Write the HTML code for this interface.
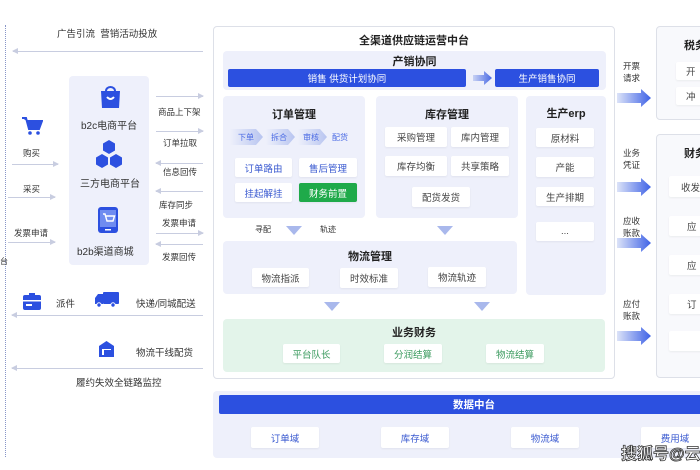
<!DOCTYPE html>
<html><head><meta charset="utf-8"><style>
*{margin:0;padding:0;box-sizing:border-box}
body{width:700px;height:470px;background:#fff;position:relative;overflow:hidden;font-family:"Liberation Sans","Noto Sans CJK SC",sans-serif;color:#333}
.a{position:absolute}
.t{position:absolute;font-size:9px;color:#333;white-space:nowrap}
.p{position:absolute;background:#eef0fb;border-radius:4px}
.b{position:absolute;background:#fff;border-radius:2px;font-size:9.5px;color:#444;display:flex;align-items:center;justify-content:center;box-shadow:0 1px 2px rgba(0,0,0,.06);white-space:nowrap}
.h{position:absolute;font-size:11px;font-weight:bold;color:#222;text-align:center;white-space:nowrap}
.ln{position:absolute;height:1px;background:#c8cde0}
.al:before{content:"";position:absolute;left:-1px;top:-3px;border:3.5px solid transparent;border-right:6px solid #c8cde0;border-left:0}
.ar:after{content:"";position:absolute;right:-1px;top:-3px;border:3.5px solid transparent;border-left:6px solid #c8cde0;border-right:0}
.blue{position:absolute;background:#2c50e0;color:#fff;font-size:9.5px;display:flex;align-items:center;justify-content:center;border-radius:2px}
.dn{position:absolute;width:0;height:0;border-left:8px solid transparent;border-right:8px solid transparent;border-top:9px solid #a9b8ec}
.ra{position:absolute;width:34px;height:18px}
.g{color:#3a9a5e}
</style></head><body>
<!-- left dotted line -->
<div class="a" style="left:5px;top:25px;width:2px;height:432px;border-left:1px dotted #8896c8"></div>
<div class="t" style="left:0;top:256px;font-size:8px">台</div>

<div class="t" style="left:57px;top:26px;font-size:9.5px">广告引流&nbsp; 营销活动投放</div>
<div class="ln al" style="left:13px;top:51px;width:190px"></div>

<div class="p" style="left:69px;top:76px;width:80px;height:189px"></div>
<svg class="a" style="left:98px;top:86px" width="25" height="23" viewBox="0 0 25 23"><path d="M3 5h19l-1 17H4z" fill="#2c50e0"/><path d="M8 5a4.5 4 0 0 1 9 0" fill="none" stroke="#2c50e0" stroke-width="2"/><path d="M9 11q3.5 4 7 0" fill="none" stroke="#fff" stroke-width="2"/></svg>
<div class="t" style="left:81px;top:117px;font-size:10px">b2c电商平台</div>
<svg class="a" style="left:93px;top:139px" width="32" height="32" viewBox="0 0 32 32" fill="#2c50e0"><polygon points="16,1 22,4.5 22,11.5 16,15 10,11.5 10,4.5"/><polygon points="9,15 15,18.5 15,25.5 9,29 3,25.5 3,18.5"/><polygon points="23,15 29,18.5 29,25.5 23,29 17,25.5 17,18.5"/></svg>
<div class="t" style="left:80px;top:175px;font-size:10px">三方电商平台</div>
<svg class="a" style="left:97px;top:206px" width="22" height="28" viewBox="0 0 22 28"><rect x="1" y="1" width="20" height="26" rx="3" fill="#2c50e0"/><rect x="3" y="4" width="16" height="17" fill="#6f8cf0"/><path d="M6 8h2l2 7h6l1.5-5H9" fill="none" stroke="#fff" stroke-width="1.4"/><rect x="8" y="23" width="6" height="1.5" fill="#fff"/></svg>
<div class="t" style="left:77px;top:243px;font-size:10px">b2b渠道商城</div>

<svg class="a" style="left:21px;top:116px" width="22" height="20" viewBox="0 0 22 20"><path d="M1 2h4l3 11h10l3-8H6" fill="#2c50e0" stroke="#2c50e0" stroke-width="2"/><circle cx="9" cy="17" r="1.8" fill="#2c50e0"/><circle cx="17" cy="17" r="1.8" fill="#2c50e0"/></svg>
<div class="t" style="left:23px;top:147px;font-size:8.5px">购买</div>
<div class="ln ar" style="left:12px;top:164px;width:46px"></div>
<div class="t" style="left:23px;top:183px;font-size:8.5px">采买</div>
<div class="ln ar" style="left:8px;top:197px;width:47px"></div>
<div class="t" style="left:14px;top:227px;font-size:8.5px">发票申请</div>
<div class="ln ar" style="left:8px;top:242px;width:47px"></div>

<div class="ln ar" style="left:156px;top:96px;width:47px"></div>
<div class="t" style="left:158px;top:106px;font-size:8.5px">商品上下架</div>
<div class="ln ar" style="left:156px;top:131px;width:47px"></div>
<div class="t" style="left:163px;top:137px;font-size:8.5px">订单拉取</div>
<div class="ln al" style="left:156px;top:163px;width:47px"></div>
<div class="t" style="left:163px;top:166px;font-size:8.5px">信息回传</div>
<div class="ln al" style="left:156px;top:191px;width:47px"></div>
<div class="t" style="left:159px;top:199px;font-size:8.5px">库存同步</div>
<div class="t" style="left:162px;top:217px;font-size:8.5px">发票申请</div>
<div class="ln ar" style="left:156px;top:233px;width:47px"></div>
<div class="ln al" style="left:156px;top:244px;width:47px"></div>
<div class="t" style="left:162px;top:251px;font-size:8.5px">发票回传</div>

<svg class="a" style="left:23px;top:293px" width="18" height="17" viewBox="0 0 18 17"><rect x="0" y="2" width="18" height="15" rx="2" fill="#2c50e0"/><rect x="6" y="0" width="6" height="6" fill="#2c50e0"/><rect x="0" y="7" width="18" height="1.5" fill="#fff"/><rect x="3" y="11" width="6" height="2" fill="#fff"/></svg>
<div class="t" style="left:56px;top:296px;font-size:9.5px">派件</div>
<svg class="a" style="left:95px;top:292px" width="24" height="16" viewBox="0 0 24 16"><rect x="8" y="0" width="16" height="12" rx="1" fill="#2c50e0"/><path d="M0 6l3-4h5v10H0z" fill="#2c50e0"/><circle cx="4" cy="13" r="2.2" fill="#2c50e0" stroke="#fff"/><circle cx="18" cy="13" r="2.2" fill="#2c50e0" stroke="#fff"/></svg>
<div class="t" style="left:136px;top:296px;font-size:9.5px">快递/同城配送</div>
<div class="ln al" style="left:12px;top:315px;width:191px"></div>
<svg class="a" style="left:99px;top:341px" width="15" height="16" viewBox="0 0 15 16"><path d="M0 5l7.5-5 7.5 5v11H0z" fill="#2c50e0"/><rect x="3" y="8" width="9" height="6" fill="#fff"/><rect x="5" y="9" width="8" height="5" fill="#2c50e0"/></svg>
<div class="t" style="left:136px;top:345px;font-size:9.5px">物流干线配货</div>
<div class="ln al" style="left:12px;top:368px;width:191px"></div>
<div class="t" style="left:76px;top:375px;font-size:9.5px">履约失效全链路监控</div>

<!-- middle big box -->
<div class="a" style="left:213px;top:26px;width:402px;height:353px;border:1px solid #dde0e8;border-radius:4px;background:#fff"></div>
<div class="h" style="left:213px;top:32px;width:402px">全渠道供应链运营中台</div>

<div class="p" style="left:223px;top:51px;width:383px;height:39px"></div>
<div class="h" style="left:223px;top:53px;width:383px">产销协同</div>
<div class="blue" style="left:228px;top:69px;width:238px;height:18px">销售 供货计划协同</div>
<svg class="a" style="left:473px;top:71px" width="20" height="14"><defs><linearGradient id="g1"><stop offset="0" stop-color="#c8d2f4"/><stop offset="1" stop-color="#4a6ae4"/></linearGradient></defs><path d="M0 4h11V0l8 7-8 7v-4H0z" fill="url(#g1)"/></svg>
<div class="blue" style="left:495px;top:69px;width:104px;height:18px">生产销售协同</div>

<div class="p" style="left:223px;top:96px;width:142px;height:122px"></div>
<div class="h" style="left:223px;top:106px;width:142px">订单管理</div>
<svg class="a" style="left:230px;top:129px" width="125" height="16"><defs><linearGradient id="g2"><stop offset="0" stop-color="#eef0fb"/><stop offset="1" stop-color="#b7c4f0"/></linearGradient></defs><path d="M0 0h26l7 8-7 8H0z" fill="url(#g2)"/><path d="M36 0h22l7 8-7 8H36l0 0z" fill="url(#g2)"/><path d="M68 0h22l7 8-7 8H68z" fill="url(#g2)"/><text x="8" y="11" font-size="8" fill="#4a6ae4">下单</text><text x="41" y="11" font-size="8" fill="#4a6ae4">拆合</text><text x="73" y="11" font-size="8" fill="#4a6ae4">审核</text><text x="102" y="11" font-size="8" fill="#4a6ae4">配货</text></svg>
<div class="b" style="left:235px;top:158px;width:57px;height:19px;color:#3a5ad0">订单路由</div>
<div class="b" style="left:299px;top:158px;width:58px;height:19px;color:#3a5ad0">售后管理</div>
<div class="b" style="left:235px;top:183px;width:57px;height:19px;color:#3a5ad0">挂起解挂</div>
<div class="b" style="left:299px;top:183px;width:58px;height:19px;background:#1faa4a;color:#fff">财务前置</div>

<div class="p" style="left:376px;top:96px;width:142px;height:122px"></div>
<div class="h" style="left:376px;top:106px;width:142px">库存管理</div>
<div class="b" style="left:385px;top:127px;width:62px;height:20px">采购管理</div>
<div class="b" style="left:451px;top:127px;width:58px;height:20px">库内管理</div>
<div class="b" style="left:385px;top:156px;width:62px;height:20px">库存均衡</div>
<div class="b" style="left:451px;top:156px;width:58px;height:20px">共享策略</div>
<div class="b" style="left:412px;top:187px;width:58px;height:20px">配货发货</div>

<div class="p" style="left:526px;top:96px;width:80px;height:199px"></div>
<div class="h" style="left:526px;top:105px;width:80px">生产erp</div>
<div class="b" style="left:536px;top:128px;width:58px;height:19px">原材料</div>
<div class="b" style="left:536px;top:157px;width:58px;height:20px">产能</div>
<div class="b" style="left:536px;top:187px;width:58px;height:19px">生产排期</div>
<div class="b" style="left:536px;top:222px;width:58px;height:19px">...</div>

<div class="t" style="left:255px;top:224px;font-size:8px">寻配</div>
<div class="t" style="left:320px;top:224px;font-size:8px">轨迹</div>
<div class="dn" style="left:286px;top:226px"></div>
<div class="dn" style="left:437px;top:226px"></div>

<div class="p" style="left:223px;top:241px;width:294px;height:53px"></div>
<div class="h" style="left:223px;top:248px;width:294px">物流管理</div>
<div class="b" style="left:252px;top:268px;width:57px;height:19px">物流指派</div>
<div class="b" style="left:340px;top:268px;width:58px;height:20px">时效标准</div>
<div class="b" style="left:428px;top:267px;width:58px;height:20px">物流轨迹</div>

<div class="dn" style="left:324px;top:302px"></div>
<div class="dn" style="left:474px;top:302px"></div>

<div class="a" style="left:223px;top:319px;width:382px;height:53px;background:#e3f4ea;border-radius:4px"></div>
<div class="h" style="left:223px;top:324px;width:382px">业务财务</div>
<div class="b g" style="left:283px;top:344px;width:57px;height:19px">平台队长</div>
<div class="b g" style="left:384px;top:344px;width:58px;height:19px">分润结算</div>
<div class="b g" style="left:486px;top:344px;width:58px;height:19px">物流结算</div>

<!-- data -->
<div class="p" style="left:213px;top:391px;width:500px;height:67px"></div>
<div class="blue" style="left:219px;top:395px;width:490px;height:19px;font-size:10.5px;font-weight:bold;padding-left:20px">数据中台</div>
<div class="b" style="left:251px;top:427px;width:68px;height:21px;color:#3a5ad0">订单域</div>
<div class="b" style="left:381px;top:427px;width:68px;height:21px;color:#3a5ad0">库存域</div>
<div class="b" style="left:511px;top:427px;width:68px;height:21px;color:#3a5ad0">物流域</div>
<div class="b" style="left:641px;top:427px;width:68px;height:21px;color:#3a5ad0">费用域</div>

<!-- right -->
<svg width="0" height="0" class="a"><defs><linearGradient id="g3"><stop offset="0" stop-color="#dce3f8"/><stop offset="1" stop-color="#3e62e6"/></linearGradient></defs></svg>
<div class="t" style="left:623px;top:60px;font-size:8.5px;line-height:12px">开票<br>请求</div>
<svg class="ra" style="left:617px;top:89px" viewBox="0 0 34 18"><path d="M0 4h24V0l10 9-10 9v-4H0z" fill="url(#g3)"/></svg>
<div class="t" style="left:623px;top:147px;font-size:8.5px;line-height:12px">业务<br>凭证</div>
<svg class="ra" style="left:617px;top:178px" viewBox="0 0 34 18"><path d="M0 4h24V0l10 9-10 9v-4H0z" fill="url(#g3)"/></svg>
<div class="t" style="left:623px;top:215px;font-size:8.5px;line-height:12px">应收<br>账款</div>
<svg class="ra" style="left:617px;top:234px" viewBox="0 0 34 18"><path d="M0 4h24V0l10 9-10 9v-4H0z" fill="url(#g3)"/></svg>
<div class="t" style="left:623px;top:298px;font-size:8.5px;line-height:12px">应付<br>账款</div>
<svg class="ra" style="left:617px;top:327px" viewBox="0 0 34 18"><path d="M0 4h24V0l10 9-10 9v-4H0z" fill="url(#g3)"/></svg>

<div class="a" style="left:656px;top:26px;width:60px;height:94px;border:1px solid #dde0e8;border-radius:4px;background:#f8f9fc"></div>
<div class="h" style="left:684px;top:37px">税务</div>
<div class="b" style="left:676px;top:62px;width:40px;height:18px;justify-content:flex-start;padding-left:10px">开</div>
<div class="b" style="left:676px;top:87px;width:40px;height:18px;justify-content:flex-start;padding-left:10px">冲</div>
<div class="a" style="left:656px;top:134px;width:60px;height:244px;border:1px solid #dde0e8;border-radius:4px;background:#f8f9fc"></div>
<div class="h" style="left:684px;top:145px">财务</div>
<div class="b" style="left:669px;top:176px;width:40px;height:21px;justify-content:flex-start;padding-left:12px">收发</div>
<div class="b" style="left:669px;top:216px;width:40px;height:20px;justify-content:flex-start;padding-left:18px">应</div>
<div class="b" style="left:669px;top:255px;width:40px;height:20px;justify-content:flex-start;padding-left:18px">应</div>
<div class="b" style="left:669px;top:294px;width:40px;height:20px;justify-content:flex-start;padding-left:18px">订</div>
<div class="b" style="left:669px;top:331px;width:40px;height:20px"></div>

<div class="t" style="left:621px;top:440px;font-size:16px;color:#fff;-webkit-text-stroke:0.8px #333;font-weight:bold">搜狐号@云</div>
</body></html>
